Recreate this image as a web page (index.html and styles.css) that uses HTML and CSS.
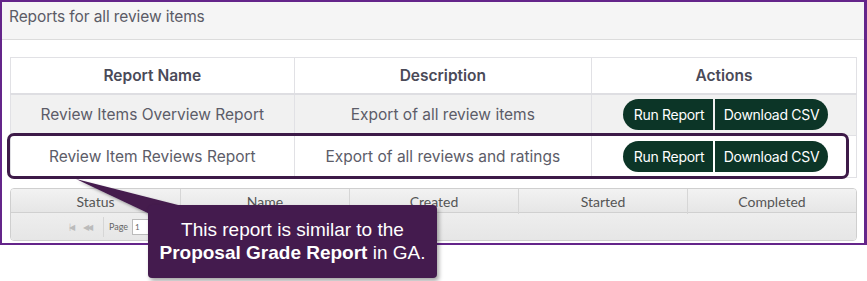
FILE: index.html
```html
<!DOCTYPE html>
<html>
<head>
<meta charset="utf-8">
<link rel="stylesheet" href="styles.css">
</head>
<body>
<div class="frame">
  <div class="panel-head">Reports for all review items</div>
  <div class="panel-body">
    <table class="reports">
      <thead>
        <tr><th class="c1">Report Name</th><th class="c2">Description</th><th class="c3">Actions</th></tr>
      </thead>
      <tbody>
        <tr class="odd">
          <td>Review Items Overview Report</td>
          <td>Export of all review items</td>
          <td><div class="btns"><span class="btn">Run Report</span><span class="btn">Download CSV</span></div></td>
        </tr>
        <tr>
          <td>Review Item Reviews Report</td>
          <td>Export of all reviews and ratings</td>
          <td><div class="btns"><span class="btn">Run Report</span><span class="btn">Download CSV</span></div></td>
        </tr>
      </tbody>
    </table>
    <div class="grid">
      <div class="grid-head">
        <div>Status</div><div>Name</div><div>Created</div><div>Started</div><div>Completed</div>
      </div>
      <div class="pager">
        <span class="pg">|◀</span><span class="pg">◀◀</span><span class="sep"></span><span class="pgtxt">Page</span><span class="pin">1</span><span class="pgtxt">of</span>
      </div>
    </div>
  </div>
</div>
<div class="highlight"></div>
<svg class="pointer" width="200" height="60" viewBox="0 0 200 60">
  <defs>
    <filter id="sh" x="-20%" y="-50%" width="140%" height="200%">
      <feDropShadow dx="2" dy="2" stdDeviation="1.5" flood-color="#000" flood-opacity="0.35"/>
    </filter>
  </defs>
  <polygon points="76,179 182,206 150,214" transform="translate(0,-170)" fill="#441b4e" filter="url(#sh)"/>
</svg>
<div class="callout">This report is similar to the<br><b>Proposal Grade Report</b> in GA.</div>
</body>
</html>
```
FILE: styles.css
```css
* { box-sizing: border-box; }
html, body { margin: 0; padding: 0; background: #fff; }
body { width: 867px; height: 281px; position: relative; overflow: hidden; font-family: "Inter", "Lato", sans-serif; }

.frame {
  width: 867px;
  height: 245px;
  border: 2px solid #64258a;
  border-right-width: 3px;
  display: flex;
  flex-direction: column;
}
.panel-head {
  height: 38px;
  background: #f5f5f5;
  border-bottom: 1px solid #dcdcdc;
  padding: 5px 0 0 7px;
  font-size: 15.5px;
  color: #5b5b66;
  letter-spacing: -0.1px;
}
.panel-body {
  padding: 17px 7px 0 8px;
}
.reports {
  width: 847px;
  border-collapse: collapse;
  font-size: 15.5px;
  color: #5c5c68;
}
.reports th, .reports td {
  border: 1px solid #e1e1e5;
  text-align: center;
  padding: 0;
}
.reports th {
  height: 36px;
  font-weight: 600;
  color: #4a4a58;
  border-bottom: 2px solid #dedee2;
}
.c1 { width: 284px; }
.c2 { width: 298px; }
.c3 { width: 265px; }
.reports td { height: 42px; }
.reports tr.odd td { background: #f1f1f1; }
.btns { display: flex; justify-content: center; gap: 2px; padding-left: 2px; }
.btn {
  background: #0c3527;
  color: #fff;
  font-size: 14px;
  font-weight: 400;
  height: 31px;
  line-height: 31px;
  letter-spacing: -0.3px;
}
.btn:first-child { width: 90px; border-radius: 16px 0 0 16px; padding-left: 3px; }
.btn:last-child { width: 113px; border-radius: 0 16px 16px 0; padding-right: 1px; padding-left: 2px; }

.grid {
  margin-top: 10px;
  width: 847px;
  border: 1px solid #cfcfcf;
  border-radius: 4px;
  overflow: hidden;
  font-family: "Lato", sans-serif;
}
.grid-head {
  display: grid;
  grid-template-columns: repeat(5, 1fr);
  height: 24px;
  background: linear-gradient(#f2f2f2, #e6e6e6);
  border-bottom: 1px solid #d0d0d0;
}
.grid-head div {
  text-align: center;
  font-size: 14px;
  line-height: 25px;
  color: #555;
  border-left: 1px solid #d6d6d6;
}
.grid-head div:first-child { border-left: none; }
.pager {
  height: 27px;
  background: linear-gradient(#eeeeee, #e6e6e6);
  display: flex;
  align-items: center;
  padding-left: 58px;
  font-size: 8px;
  color: #bbb;
}
.pg { margin-right: 10px; letter-spacing: -2px; font-size: 8px; }
.sep { width: 1px; height: 20px; background: #d6d6d6; margin: 0 5px 0 2px; }
.pgtxt { color: #666; font-size: 9px; margin-right: 4px; }
.pin { width: 20px; height: 16px; background: #fff; border: 1px solid #bbb; color: #666; font-size: 8px; padding: 2px 2px; margin-right: 4px; }

.highlight {
  position: absolute;
  left: 7px;
  top: 133px;
  width: 842px;
  height: 46px;
  border: 3px solid #3d1a48;
  border-radius: 7px;
}
.pointer { position: absolute; left: 0; top: 170px; }
.callout {
  position: absolute;
  left: 148px;
  top: 205px;
  width: 289px;
  height: 73px;
  background: #441b4e;
  border-radius: 4px;
  box-shadow: 2px 3px 4px rgba(0,0,0,0.35);
  color: #fff;
  font-family: "Liberation Sans", Arial, sans-serif;
  font-size: 19px;
  line-height: 23px;
  text-align: center;
  padding-top: 13px;
}
.callout b { font-weight: bold; }
```
